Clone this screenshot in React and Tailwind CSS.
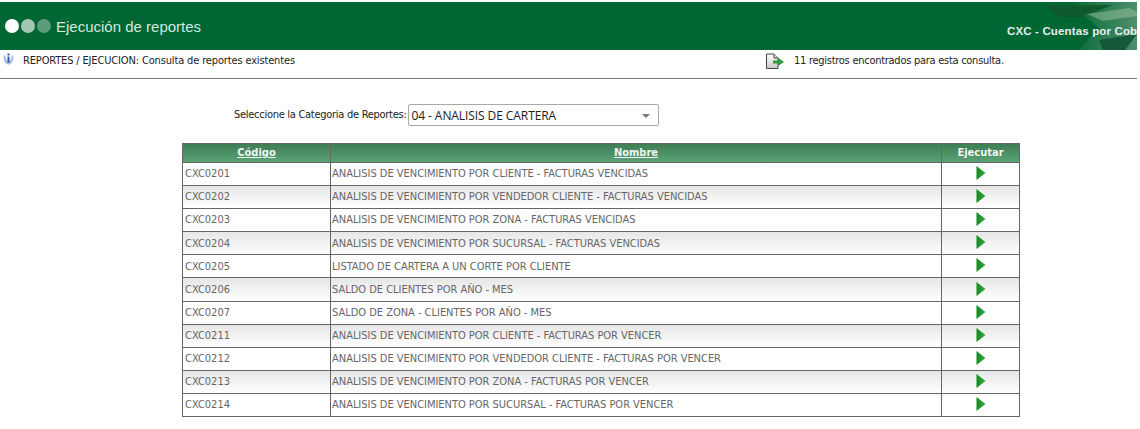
import React from 'react';

const reportes = [
    ['CXC0201', 'ANALISIS DE VENCIMIENTO POR CLIENTE - FACTURAS VENCIDAS'],
    ['CXC0202', 'ANALISIS DE VENCIMIENTO POR VENDEDOR CLIENTE - FACTURAS VENCIDAS'],
    ['CXC0203', 'ANALISIS DE VENCIMIENTO POR ZONA - FACTURAS VENCIDAS'],
    ['CXC0204', 'ANALISIS DE VENCIMIENTO POR SUCURSAL - FACTURAS VENCIDAS'],
    ['CXC0205', 'LISTADO DE CARTERA A UN CORTE POR CLIENTE'],
    ['CXC0206', 'SALDO DE CLIENTES POR AÑO - MES'],
    ['CXC0207', 'SALDO DE ZONA - CLIENTES POR AÑO - MES'],
    ['CXC0211', 'ANALISIS DE VENCIMIENTO POR CLIENTE - FACTURAS POR VENCER'],
    ['CXC0212', 'ANALISIS DE VENCIMIENTO POR VENDEDOR CLIENTE - FACTURAS POR VENCER'],
    ['CXC0213', 'ANALISIS DE VENCIMIENTO POR ZONA - FACTURAS POR VENCER'],
    ['CXC0214', 'ANALISIS DE VENCIMIENTO POR SUCURSAL - FACTURAS POR VENCER'],
];

const PlayIcon = () => (
    <svg width="10" height="14" viewBox="0 0 10 14" className="mb-[2px] block">
        <defs>
            <linearGradient id="play" x1="0" y1="0" x2="1" y2="0">
                <stop offset="0" stopColor="#0f8a1f" />
                <stop offset="1" stopColor="#3fa84a" />
            </linearGradient>
        </defs>
        <path d="M0.5 0 L9.5 7 L0.5 14 Z" fill="url(#play)" />
    </svg>
);

const InfoIcon = () => (
    <svg width="11" height="12" viewBox="0 0 11 12" className="block">
        <path d="M0.5 3 C0.5 9 3 11.5 5.5 11.5 C8 11.5 10.5 9 10.5 3 L8.5 2 C8.5 6 7.5 8 5.5 8 C3.5 8 2.5 6 2.5 2 Z" fill="#a9bde3" />
        <rect x="4.5" y="0.5" width="2" height="2" fill="#2f55a5" />
        <rect x="4.5" y="3.5" width="2" height="6" fill="#2f55a5" />
    </svg>
);

const ExportIcon = () => (
    <svg width="20" height="17" viewBox="0 0 20 17" className="block">
        <defs>
            <linearGradient id="hoja" x1="0" y1="0" x2="0" y2="1">
                <stop offset="0" stopColor="#ffffff" />
                <stop offset="1" stopColor="#c9c9c9" />
            </linearGradient>
        </defs>
        <path d="M1.5 1 H9 L13 5 V15.5 H1.5 Z" fill="url(#hoja)" stroke="#444" strokeWidth="1" />
        <path d="M9 1 V5 H13" fill="#ddd" stroke="#444" strokeWidth="1" />
        <path d="M8 7.5 H13 V4.5 L19 9 L13 13 V10.5 H8 Z" fill="#2e9b3e" />
    </svg>
);

const BannerLeaves = () => (
    <svg width="100" height="48" viewBox="0 0 100 48" className="absolute right-0 top-0">
        <defs>
            <linearGradient id="leaf" x1="0" y1="0" x2="1" y2="0">
                <stop offset="0" stopColor="#006633" />
                <stop offset="1" stopColor="#4f8f6c" />
            </linearGradient>
        </defs>
        <path d="M30 0 H100 V48 H42 L62 26 Z" fill="url(#leaf)" />
        <path d="M8 4 L76 3 L40 16 L20 14 Z" fill="#0f5a2c" />
        <path d="M50 12 L92 6 L100 10 L100 14 L66 19 Z" fill="#9dbf9f" opacity="0.5" />
        <path d="M62 38 L100 32 L88 48 H66 Z" fill="#15583a" />
    </svg>
);

export default function App() {
    return (
        <div className="h-[429px] w-[1140px] overflow-hidden bg-white font-['DejaVu_Sans',sans-serif] text-[11px] text-[#222] [font-stretch:condensed]">
            <div className="h-[2px]" />
            <div className="relative flex h-[48px] w-[1137px] items-center bg-[#006633] pl-[5px]">
                <div className="flex gap-[2px]">
                    <span className="h-[14px] w-[14px] rounded-full bg-white" />
                    <span className="h-[14px] w-[14px] rounded-full bg-[#a3c7b2]" />
                    <span className="h-[14px] w-[14px] rounded-full bg-[#5c9c7c]" />
                </div>
                <span className="ml-[5px] mt-[2px] font-['Liberation_Sans',sans-serif] text-[15px] text-[#d5e8dc] [font-stretch:normal]">
                    Ejecución de reportes
                </span>
                <BannerLeaves />
                <div className="absolute left-[1007px] top-[21px] w-[130px] overflow-hidden whitespace-nowrap font-['Liberation_Sans',sans-serif] text-[11.5px] font-bold tracking-[0.15px] text-[#e6efe9] [font-stretch:normal]">
                    CXC - Cuentas por Cobrar
                </div>
            </div>

            <div className="flex h-[29px] w-[1137px] items-start border-b border-[#777] pl-[3px] pt-[3px]">
                <InfoIcon />
                <span className="ml-[9px] w-[742px] tracking-[-0.15px]">REPORTES / EJECUCION: Consulta de reportes existentes</span>
                <ExportIcon />
                <span className="ml-[9px] tracking-[-0.27px]">11 registros encontrados para esta consulta.</span>
            </div>

            <div className="mt-[25px] flex h-[22px] items-center pl-[234px]">
                <span className="pt-[1px] tracking-[-0.28px]">Seleccione la Categoria de Reportes:</span>
                <div className="ml-[2px] flex h-[22px] w-[251px] items-center justify-between rounded-[2px] border border-[#a9a9a9] pl-[2px] pr-[8px] pt-[1px] font-['Open_Sans',sans-serif] text-[12px] tracking-[-0.08px] text-[#222] [font-stretch:normal]">
                    <span>04 - ANALISIS DE CARTERA</span>
                    <span className="h-0 w-0 border-x-[4px] border-t-[4px] border-x-transparent border-t-[#777]" />
                </div>
            </div>

            <div className="ml-[182px] mt-[17px] w-[838px] border border-[#666]">
                <div className="grid h-[18px] grid-cols-[148px_611px_1fr] bg-gradient-to-b from-[#3f7d55] to-[#5aa377] pt-[1px] font-bold text-[#f0f5f1]">
                    <div className="flex items-center justify-center border-r border-[#666] underline">Código</div>
                    <div className="flex items-center justify-center border-r border-[#666] underline">Nombre</div>
                    <div className="flex items-center justify-center">Ejecutar</div>
                </div>
                {reportes.map(([codigo, nombre], i) => (
                    <div
                        key={codigo}
                        className={`grid h-[23.1px] grid-cols-[148px_611px_1fr] border-t border-[#666] text-[#666] ${
                            i % 2 === 1 ? 'bg-gradient-to-b from-[#e6e6e6] to-white' : 'bg-white'
                        }`}
                    >
                        <div className="flex items-center border-r border-[#666] pl-[2px] pt-[1px]">{codigo}</div>
                        <div className="flex items-center border-r border-[#666] pl-[1px] pt-[1px] tracking-[-0.02px]">{nombre}</div>
                        <div className="flex items-center justify-center">
                            <PlayIcon />
                        </div>
                    </div>
                ))}
            </div>
        </div>
    );
}
